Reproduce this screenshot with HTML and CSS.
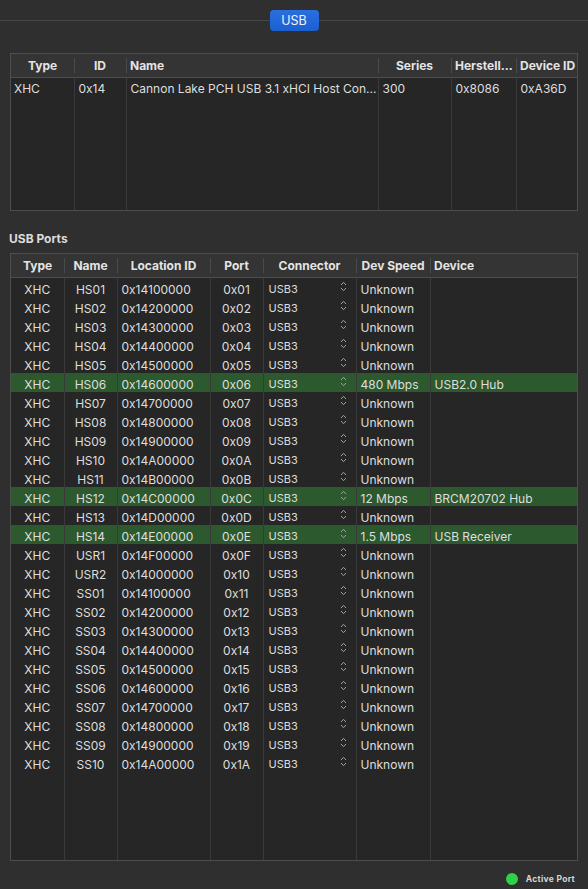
FILE: index.html
```html
<!DOCTYPE html>
<html>
<head>
    <meta charset="UTF-8">
    <title>USB</title>
    <link rel="stylesheet" href="styles.css">
</head>
<body>
<div class="tabbar">
    <span class="tabline"></span>
    <span class="tab">USB</span>
    <span class="tabline"></span>
</div>

<div class="panel">
    <div class="box box-ctrl">
        <table class="grid ctrl">
            <colgroup>
                <col style="width:63px"><col style="width:52px"><col style="width:252px">
                <col style="width:73px"><col style="width:65px"><col>
            </colgroup>
            <thead>
            <tr>
                <th>Type</th><th>ID</th><th class="left">Name</th>
                <th>Series</th><th>Herstell...</th><th>Device ID</th>
            </tr>
            </thead>
            <tbody>
            <tr>
                <td>XHC</td><td>0x14</td><td>Cannon Lake PCH USB 3.1 xHCI Host Con...</td>
                <td>300</td><td>0x8086</td><td>0xA36D</td>
            </tr>
            <tr class="fill"><td></td><td></td><td></td><td></td><td></td><td></td></tr>
            </tbody>
        </table>
    </div>

    <h2 class="caption">USB Ports</h2>

    <div class="box box-ports">
        <table class="grid ports">
            <colgroup>
                <col style="width:53px"><col style="width:53px"><col style="width:93px">
                <col style="width:53px"><col style="width:93px"><col style="width:74px"><col>
            </colgroup>
            <thead>
            <tr>
                <th>Type</th><th>Name</th><th>Location ID</th><th>Port</th>
                <th>Connector</th><th>Dev Speed</th><th class="left">Device</th>
            </tr>
            </thead>
            <tbody id="rows"></tbody>
        </table>
    </div>
</div>

<div class="legend">
    <span class="dot"></span>
    <span class="legend-text">Active Port</span>
</div>

<script>
    var ports = [
        ["HS01", "0x14100000", "0x01"],
        ["HS02", "0x14200000", "0x02"],
        ["HS03", "0x14300000", "0x03"],
        ["HS04", "0x14400000", "0x04"],
        ["HS05", "0x14500000", "0x05"],
        ["HS06", "0x14600000", "0x06", "480 Mbps", "USB2.0 Hub"],
        ["HS07", "0x14700000", "0x07"],
        ["HS08", "0x14800000", "0x08"],
        ["HS09", "0x14900000", "0x09"],
        ["HS10", "0x14A00000", "0x0A"],
        ["HS11", "0x14B00000", "0x0B"],
        ["HS12", "0x14C00000", "0x0C", "12 Mbps", "BRCM20702 Hub"],
        ["HS13", "0x14D00000", "0x0D"],
        ["HS14", "0x14E00000", "0x0E", "1.5 Mbps", "USB Receiver"],
        ["USR1", "0x14F00000", "0x0F"],
        ["USR2", "0x14000000", "0x10"],
        ["SS01", "0x14100000", "0x11"],
        ["SS02", "0x14200000", "0x12"],
        ["SS03", "0x14300000", "0x13"],
        ["SS04", "0x14400000", "0x14"],
        ["SS05", "0x14500000", "0x15"],
        ["SS06", "0x14600000", "0x16"],
        ["SS07", "0x14700000", "0x17"],
        ["SS08", "0x14800000", "0x18"],
        ["SS09", "0x14900000", "0x19"],
        ["SS10", "0x14A00000", "0x1A"]
    ];

    //上下箭头
    var chevron = '<svg class="updown" width="7" height="11" viewBox="0 0 7 11">' +
        '<path d="M1 4 L3.5 1.3 L6 4 M1 7 L3.5 9.7 L6 7" fill="none" stroke="#a0a0a0" stroke-width="1"/></svg>';

    var html = "";
    for (var i = 0; i < ports.length; i++) {
        var p = ports[i];
        var active = p.length > 3;
        html += '<tr' + (active ? ' class="active"' : '') + '>' +
            '<td class="center">XHC</td>' +
            '<td class="center">' + p[0] + '</td>' +
            '<td>' + p[1] + '</td>' +
            '<td class="center">' + p[2] + '</td>' +
            '<td class="conn"><span class="conn-in"><span class="conn-val">USB3</span>' + chevron + '</span></td>' +
            '<td>' + (active ? p[3] : "Unknown") + '</td>' +
            '<td>' + (active ? p[4] : "") + '</td>' +
            '</tr>';
    }
    html += '<tr class="fill"><td></td><td></td><td></td><td></td><td></td><td></td><td></td></tr>';
    document.getElementById("rows").innerHTML = html;
</script>
</body>
</html>
```

FILE: styles.css
```css
* {
    margin: 0;
    padding: 0;
    box-sizing: border-box;
}

body {
    width: 588px;
    height: 889px;
    background-color: #2f2f2f;
    font-family: Inter, "Liberation Sans", sans-serif;
    font-size: 12px;
    color: #dedede;
    overflow: hidden;
}

/*顶部标签*/
.tabbar {
    display: flex;
    align-items: center;
    height: 41px;
    padding-bottom: 1px;
}

.tabline {
    flex: 1;
    height: 1px;
    background-color: #474747;
}

.tab {
    width: 49px;
    height: 21px;
    line-height: 21px;
    text-align: center;
    color: #f2f2f2;
    font-size: 12.5px;
    border-radius: 4px;
    background: linear-gradient(#2a6fe0, #1b5fd0);
}

.panel {
    padding: 12px 10px 0;
}

.box {
    border: 1px solid #4d4d4d;
    background-color: #262626;
}

.box-ctrl {
    height: 158px;
}

.box-ports {
    height: 608px;
}

.grid {
    width: 100%;
    height: 100%;
    border-collapse: collapse;
    table-layout: fixed;
}

.grid th {
    height: 23px;
    background-color: #343434;
    border-bottom: 1px solid #4d4d4d;
    font-weight: bold;
    color: #e4e4e4;
    text-align: center;
    white-space: nowrap;
    position: relative;
    padding: 0 4px;
}

/*表头分隔线*/
.grid th + th::before {
    content: "";
    position: absolute;
    left: 0;
    top: 4px;
    bottom: 4px;
    width: 1px;
    background-color: #4a4a4a;
}

.grid th.left {
    text-align: left;
}

.grid td {
    height: 19px;
    padding: 4px 4px 0;
    line-height: 15px;
    white-space: nowrap;
    overflow: hidden;
    text-overflow: clip;
    vertical-align: middle;
}

.grid td + td {
    border-left: 1px solid #3a3a3a;
}

.grid tr.fill td {
    height: auto;
}

.ctrl td {
    vertical-align: top;
    padding: 3px 4px 0 4px;
    height: 22px;
}

.ctrl td:first-child {
    padding-left: 3px;
}

.ctrl tr.fill td {
    padding: 0;
}

.ports td.center {
    text-align: center;
}

.ports tr.active td {
    background-color: #2c5a2e;
}

.ports td.conn {
    padding: 0 4px;
    vertical-align: top;
}

.conn-in {
    display: flex;
    align-items: flex-start;
    justify-content: space-between;
    height: 19px;
    padding-right: 5px;
    padding-left: 1px;
}

.conn-val {
    font-size: 11px;
    line-height: 13px;
    padding-top: 5px;
}

.updown {
    display: block;
    margin-top: 3px;
}

.caption {
    font-size: 12px;
    font-weight: bold;
    color: #dcdcdc;
    margin: 20px 0 7px -1px;
    height: 15px;
    line-height: 15px;
}

/*底部图例*/
.legend {
    display: flex;
    justify-content: flex-end;
    align-items: center;
    padding: 12px 13px 0 0;
}

.dot {
    width: 12px;
    height: 12px;
    border-radius: 50%;
    background-color: #2fd04a;
    margin-right: 8px;
}

.legend-text {
    font-size: 8.5px;
    letter-spacing: 0.3px;
    font-weight: bold;
    color: #d6d6d6;
}
```
